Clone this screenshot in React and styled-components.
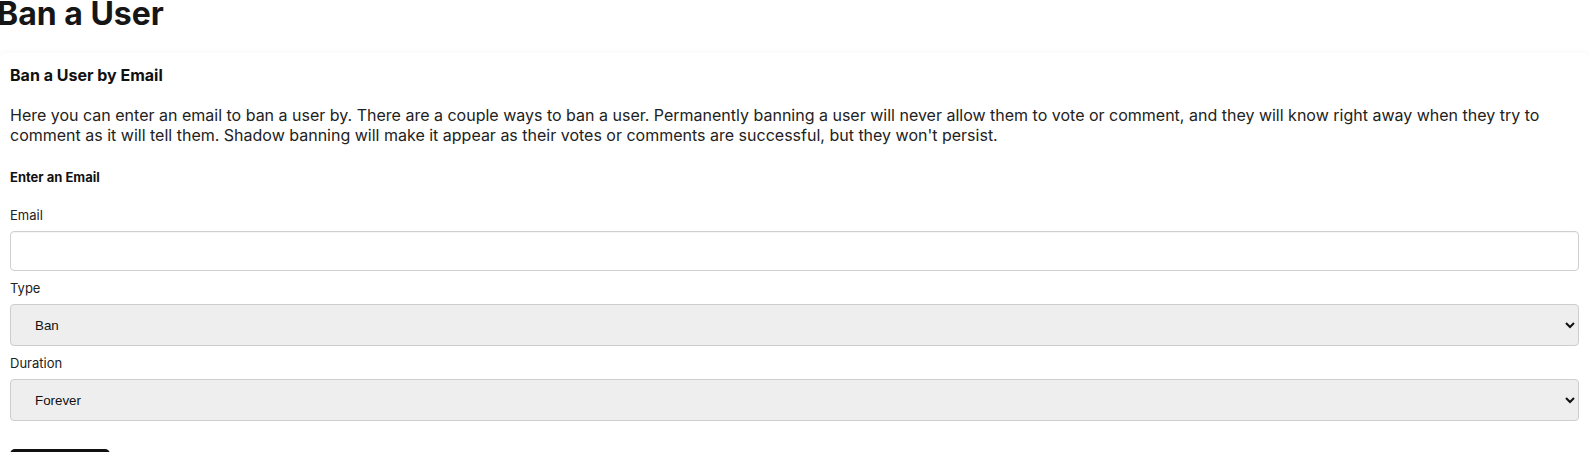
import React from "react";
import styled, { createGlobalStyle } from "styled-components";

const GlobalStyle = createGlobalStyle`
  html, body {
    margin: 0;
    padding: 0;
    background: #ffffff;
    font-family: Inter, "Noto Sans", sans-serif;
    color: #1f1f1f;
  }
`;

const Page = styled.div`
  width: 100%;
  overflow: hidden;
`;

const PageTitle = styled.h1`
  font-size: 32px;
  font-weight: 700;
  line-height: normal;
  color: #161616;
  margin: -6px 0 20px -3px;
`;

const Card = styled.section`
  background: #fff;
  border-radius: 6px;
  box-shadow: 0 -1px 5px rgba(0, 0, 0, 0.03);
  padding: 12px 11px 30px 10px;
`;

const CardTitle = styled.h2`
  font-size: 16px;
  font-weight: 700;
  line-height: normal;
  color: #111;
  margin: 0 0 20px 0;
`;

const Description = styled.p`
  font-size: 16px;
  line-height: normal;
  color: #222;
  margin: 0 0 24px 0;
`;

const SectionTitle = styled.h3`
  font-size: 13px;
  font-weight: 700;
  line-height: normal;
  color: #111;
  margin: 0 0 22px 0;
`;

const Form = styled.form`
  display: flex;
  flex-direction: column;
  gap: 9px;
`;

const Field = styled.div`
  display: flex;
  flex-direction: column;
`;

const Label = styled.label`
  font-size: 13px;
  line-height: normal;
  color: #222;
  margin-bottom: 8px;
`;

const TextInput = styled.input`
  box-sizing: border-box;
  width: 100%;
  height: 40px;
  border: 1px solid #cfcfcf;
  border-radius: 4px;
  box-shadow: inset 0 1px 1px rgba(0, 0, 0, 0.04);
  background: #fff;
  padding: 0 12px;
  font-family: "Liberation Sans", Arial, sans-serif;
  font-size: 13px;
`;

const Select = styled.select`
  box-sizing: border-box;
  width: 100%;
  height: 42px;
  border: 1px solid #cdcdcd;
  border-radius: 4px;
  background-color: #eeeeee;
  padding: 0 20px;
  font-family: "Liberation Sans", Arial, sans-serif;
  font-size: 13.33px;
  color: #111;
`;

const SubmitButton = styled.button`
  align-self: flex-start;
  margin-top: 19px;
  width: 100px;
  height: 40px;
  background: #111;
  color: #fff;
  border: none;
  border-radius: 5px;
  font-family: Inter, sans-serif;
  font-size: 14px;
  font-weight: 600;
`;

export default function App() {
  return (
    <Page>
      <GlobalStyle />
      <PageTitle>Ban a User</PageTitle>
      <Card>
        <CardTitle>Ban a User by Email</CardTitle>
        <Description>
          Here you can enter an email to ban a user by. There are a couple ways
          to ban a user. Permanently banning a user will never allow them to
          vote or comment, and they will know right away when they try to
          comment as it will tell them. Shadow banning will make it appear as
          their votes or comments are successful, but they won't persist.
        </Description>
        <SectionTitle>Enter an Email</SectionTitle>
        <Form onSubmit={(e) => e.preventDefault()}>
          <Field>
            <Label htmlFor="email">Email</Label>
            <TextInput id="email" type="email" />
          </Field>
          <Field>
            <Label htmlFor="type">Type</Label>
            <Select id="type" defaultValue="ban">
              <option value="ban">Ban</option>
              <option value="shadow">Shadow Ban</option>
            </Select>
          </Field>
          <Field>
            <Label htmlFor="duration">Duration</Label>
            <Select id="duration" defaultValue="forever">
              <option value="forever">Forever</option>
              <option value="day">1 Day</option>
              <option value="week">1 Week</option>
              <option value="month">1 Month</option>
            </Select>
          </Field>
          <SubmitButton type="submit">Ban User</SubmitButton>
        </Form>
      </Card>
    </Page>
  );
}
